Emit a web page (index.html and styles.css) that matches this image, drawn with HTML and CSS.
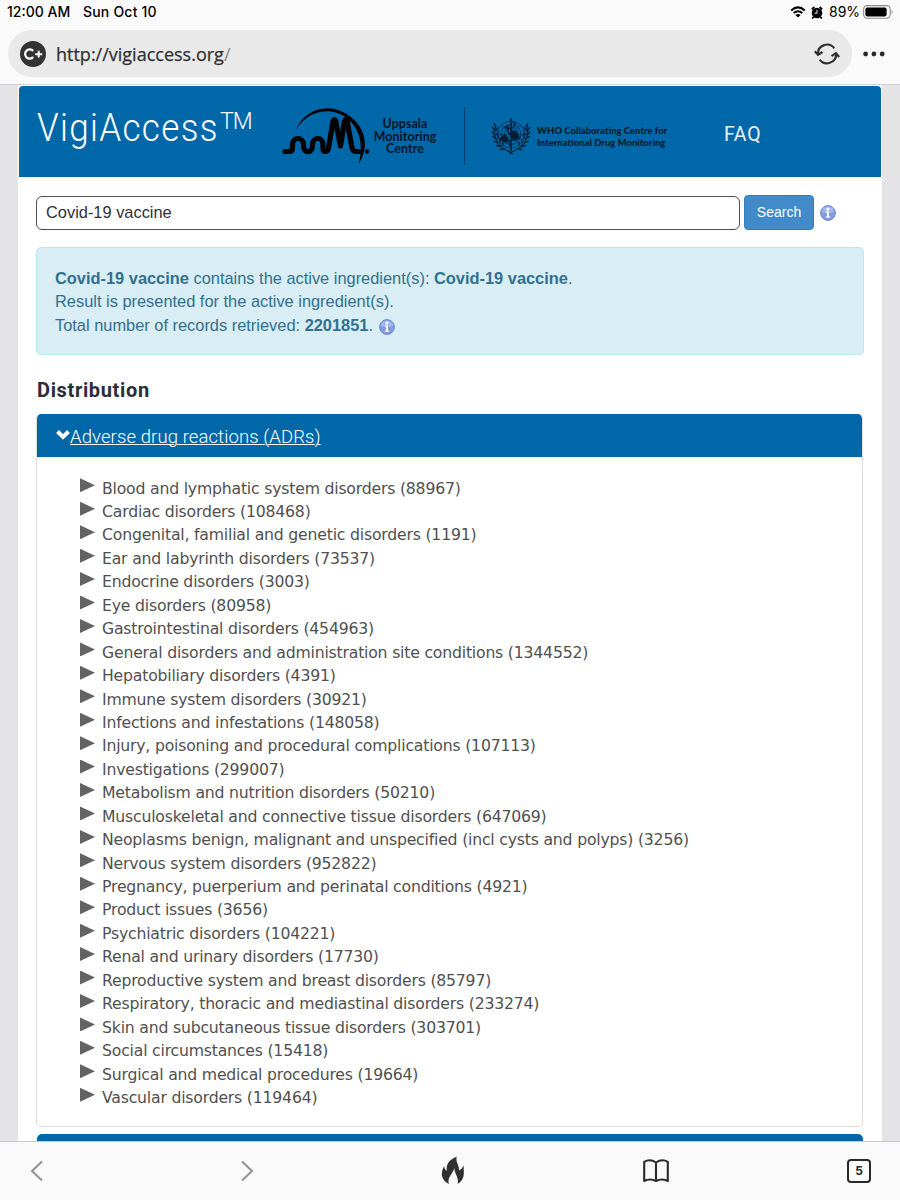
FILE: index.html
```html
<!DOCTYPE html>
<html lang="en">
<head>
<meta charset="utf-8">
<title>VigiAccess</title>
<link rel="stylesheet" href="styles.css">
</head>
<body>
<header class="chrome">
  <div class="status">
    <span class="time">12:00 AM</span><span class="date">Sun Oct 10</span>
    <div class="indicators">
      <svg class="wifi" width="16" height="12" viewBox="0 0 16 12"><path d="M1.2 4.4Q8-1.6 14.8 4.4M3.7 7.1Q8 3.4 12.3 7.1" fill="none" stroke="#000" stroke-width="2"/><path d="M8 11.6L5.4 9Q8 7 10.6 9z"/></svg>
      <svg class="alarm" width="12" height="13" viewBox="0 0 12 13"><circle cx="6" cy="7" r="5.300"/><path d="M.8 3.4L3.4 1M11.2 3.4L8.6 1M2.5 11L1.2 12.5M9.5 11l1.3 1.5" stroke="#000" stroke-width="1.8"/><path d="M6 3.8V7.2H3.4" fill="none" stroke="#fff" stroke-width=".9"/></svg>
      <span class="percent">89%</span>
      <svg class="battery" width="31" height="14" viewBox="0 0 31 14"><rect x=".6" y=".6" width="26.6" height="12.6" rx="3.6" fill="none" stroke="#8c8c8c" stroke-width="1.1"/><rect x="2.4" y="2.4" width="21.2" height="9" rx="1.8"/><path d="M28.6 4.6q2 2.3 0 4.6z" fill="#8c8c8c"/></svg>
    </div>
  </div>
  <div class="toolbar">
    <div class="address">
      <svg class="badge" width="26" height="26" viewBox="0 0 26 26"><circle cx="13" cy="13" r="13" fill="#333"/><path d="M13.200 10A4.600 4.600 0 1 0 13.200 16" fill="none" stroke="#fff" stroke-width="2.200"/><path d="M15.2 13.2h7M18.7 9.8v6.8" stroke="#fff" stroke-width="2"/></svg>
      <span class="url">http://vigiaccess.org<i>/</i></span>
      <svg class="reload" width="26" height="22" viewBox="0 0 26 22" fill="none" stroke="#303030" stroke-width="2.2"><path d="M20.3 5.3A9.1 9.1 0 0 0 3.9 10.8M5.7 16.6A9.1 9.1 0 0 0 22.1 11.2"/><path d="M.8 8.2L4 11.8 8.5 9M17.5 13.2L22 10.2 25.2 14"/></svg>
    </div>
    <svg class="more" width="24" height="6" viewBox="0 0 24 6" fill="#292929"><circle cx="3.6" cy="3" r="2.4"/><circle cx="11.9" cy="3" r="2.4"/><circle cx="20.2" cy="3" r="2.4"/></svg>
  </div>
</header>

<main class="viewport">
  <div class="page">
    <div class="banner">
      <h1 class="title"><span class="name">VigiAccess</span><span class="tm">TM</span></h1>
      <svg class="umc" width="88" height="60" viewBox="0 0 88 60"><path d="M3.2 45.500H7Q10.500 45.500 10.500 42V38.500C10.500 30.500 21.500 30.500 21.500 38.500V40C21.500 47.500 30.500 47.500 30.500 40V38.500C30.500 30.500 41 30.500 41 38.500V43Q41 45.500 43.500 45.500Q46 45.500 46.500 42L51 15Q52.300 12 53.600 15L58.500 40L62.500 15Q63.800 12 65.100 15L70 42Q71 45.500 74 45.500H77" fill="none" stroke="#000" stroke-width="5.200" stroke-linecap="round" stroke-linejoin="round"/><path d="M14 24C21 5 44-4 63 7C84 19 88 41 76.500 58C82 39 78 21 62 10C46 0 24 6 14 24z"/><circle cx="85" cy="45.500" r="2.200"/></svg>
      <div class="umc-name">Uppsala<br>Monitoring<br>Centre</div>
      <div class="divider"></div>
      <svg class="who" width="40" height="38" viewBox="0 0 40 38" fill="none" stroke="#031f35"><g stroke-width=".6"><circle cx="20" cy="17.500" r="13.500"/><circle cx="20" cy="17.500" r="10"/><circle cx="20" cy="17.500" r="6.500"/><path d="M6.500 17.500h27M10.500 8l19 19M29.500 8l-19 19"/></g><path d="M20 1v33" stroke-width="1.500"/><path d="M20 5q5 0 4 3t-4 3-3 3 3 3 2.500 3-2.500 3-2 3 2 3" stroke-width="1.100"/><path d="M8 22l5-5 3 2 2 5-4 2zM20 13l6 2 3 6-5 3-4-3zM13 10l5-2-1 5z" fill="#031f35" stroke-width=".3"/><path d="M5 8Q-.5 25 16 33.500M35 8Q40.500 25 24 33.500" stroke-width="1.200"/><path d="M4.500 10L3 6M4 14L1 10M4 18L.8 14.500M5 22L1.200 19M7 26L2.500 24M10 29.500L5 28.500M14 32L8.500 32.500M5 14l2-4M5 18l2.500-3M6 22l2-4M8.500 26l1-4M12 29l0-4M35.500 10L37 6M36 14l3-4M36 18l3.200-3.500M35 22l3.800-3M33 26l4.500-2M30 29.500l5-1M26 32l5.500.5M35 14l-2-4M35 18l-2.500-3M34 22l-2-4M31.500 26l-1-4M28 29v-4M16 33.500l6 3M24 33.500L18 36.500" stroke-width="1.300"/></svg>
      <div class="who-name">WHO Collaborating Centre for<br>International Drug Monitoring</div>
      <a class="faq">FAQ</a>
    </div>

    <div class="search">
      <div class="field">Covid-19 vaccine</div>
      <div class="button">Search</div>
      <svg class="info" width="16" height="16" viewBox="0 0 16 16"><circle cx="8" cy="8" r="7.400" fill="#829be0" stroke="#7289c8"/><path d="M2 7a6 5.500 0 0 1 12 0q-6 2-12 0z" fill="#a5b8ec"/><circle cx="8" cy="4" r="1.500" fill="#fff"/><path d="M6 6.500h3v5h1.300v1.200H5.800v-1.200H7v-3.800H6z" fill="#fff"/></svg>
    </div>

    <div class="notice">
      <p class="n1"><b>Covid-19 vaccine</b> contains the active ingredient(s): <b>Covid-19 vaccine</b>.</p>
      <p class="n2">Result is presented for the active ingredient(s).</p>
      <p class="n3"><span>Total number of records retrieved: <b>2201851</b>.</span>
        <svg class="info" width="16" height="16" viewBox="0 0 16 16"><circle cx="8" cy="8" r="7.400" fill="#829be0" stroke="#7289c8"/><path d="M2 7a6 5.500 0 0 1 12 0q-6 2-12 0z" fill="#a5b8ec"/><circle cx="8" cy="4" r="1.500" fill="#fff"/><path d="M6 6.500h3v5h1.300v1.200H5.800v-1.200H7v-3.800H6z" fill="#fff"/></svg></p>
    </div>

    <h2 class="heading">Distribution</h2>
    <section class="panel">
      <div class="panel-head"><svg class="chev" width="14" height="10" viewBox="0 0 14 10"><path d="M1.500 1.500L7 7l5.500-5.500" fill="none" stroke="#fff" stroke-width="4"/></svg><a class="panel-link">Adverse drug reactions (ADRs)</a></div>
      <ul class="list">
        <li>Blood and lymphatic system disorders (88967)</li>
        <li>Cardiac disorders (108468)</li>
        <li>Congenital, familial and genetic disorders (1191)</li>
        <li>Ear and labyrinth disorders (73537)</li>
        <li>Endocrine disorders (3003)</li>
        <li>Eye disorders (80958)</li>
        <li>Gastrointestinal disorders (454963)</li>
        <li>General disorders and administration site conditions (1344552)</li>
        <li>Hepatobiliary disorders (4391)</li>
        <li>Immune system disorders (30921)</li>
        <li>Infections and infestations (148058)</li>
        <li>Injury, poisoning and procedural complications (107113)</li>
        <li>Investigations (299007)</li>
        <li>Metabolism and nutrition disorders (50210)</li>
        <li>Musculoskeletal and connective tissue disorders (647069)</li>
        <li>Neoplasms benign, malignant and unspecified (incl cysts and polyps) (3256)</li>
        <li>Nervous system disorders (952822)</li>
        <li>Pregnancy, puerperium and perinatal conditions (4921)</li>
        <li>Product issues (3656)</li>
        <li>Psychiatric disorders (104221)</li>
        <li>Renal and urinary disorders (17730)</li>
        <li>Reproductive system and breast disorders (85797)</li>
        <li>Respiratory, thoracic and mediastinal disorders (233274)</li>
        <li>Skin and subcutaneous tissue disorders (303701)</li>
        <li>Social circumstances (15418)</li>
        <li>Surgical and medical procedures (19664)</li>
        <li>Vascular disorders (119464)</li>
      </ul>
    </section>
    <div class="next-panel"></div>
  </div>
</main>

<footer class="tabs">
  <svg class="back" width="14" height="22" viewBox="0 0 14 22"><path d="M12 1.500L2 11l10 9.500" fill="none" stroke="#929292" stroke-width="2"/></svg>
  <svg class="forward" width="14" height="22" viewBox="0 0 14 22"><path d="M2 1.500L12 11 2 20.500" fill="none" stroke="#929292" stroke-width="2"/></svg>
  <svg class="fire" width="24" height="29" viewBox="0 0 24 29"><path d="M15.800.5C14 6 18.500 9 18 14.500Q20.500 13.500 22.800 9.500C22 14 25.500 23 16.500 28C18.500 22 13.500 18 13.300 12C12.500 17 5.500 22 8 28C-.5 24-.5 16 3.300 10Q3 13.500 5.800 15C5 8 8 4 15.800.5z" fill="#303030"/></svg>
  <svg class="book" width="26" height="24" viewBox="0 0 26 24"><path d="M13 3.500Q7-.5 1.200 2.800V22Q7 19 13 22Q19 19 24.800 22V2.800Q19-.5 13 3.500V22" fill="none" stroke="#292929" stroke-width="2.100" stroke-linejoin="round"/></svg>
  <div class="count">5</div>
</footer>
</body>
</html>
```
FILE: styles.css
```css
* { box-sizing: border-box; }
body { margin: 0; width: 900px; height: 1200px; overflow: hidden; display: flex; flex-direction: column; background: #e4e4e7; font-family: "Liberation Sans", Arial, sans-serif; }
svg { display: block; flex: none; }
p, h1, h2, ul { margin: 0; padding: 0; }

.chrome { height: 85px; flex: none; background: #fafafa; border-bottom: 1px solid #d2d2d4; }
.status { height: 30px; padding: 2px 6px 0 7px; display: flex; align-items: flex-start; font: 500 14px/20px Inter, sans-serif; color: #000; white-space: nowrap; }
.time { width: 76px; }
.date { letter-spacing: .2px; }
.indicators { margin-left: auto; display: flex; align-items: center; height: 20px; }
.alarm { margin: 0 6px 0 5px; }
.percent { width: 34px; font-weight: 400; }
.toolbar { display: flex; align-items: center; }
.address { width: 844px; height: 47px; margin-left: 8px; padding: 0 12px; border-radius: 24px; background: #e9e9e9; display: flex; align-items: center; }
.url { margin-left: 10px; font: 500 18px/24px "Open Sans", sans-serif; color: #303030; -webkit-text-stroke: .25px #303030; }
.url i { font-style: normal; color: #888; -webkit-text-stroke: 0; }
.reload { margin-left: auto; }
.more { margin-left: 10px; }

.viewport { height: 1056px; flex: none; overflow: hidden; }
.page { width: 864px; height: 1056px; padding-top: 1px; margin-left: 18px; background: #fff; overflow: hidden; }
.banner { width: 862px; height: 91px; margin-left: 1px; background: #0067a9; border-radius: 4px 4px 0 0; display: flex; align-items: flex-start; white-space: nowrap; }
.title { width: 246px; padding: 19px 0 0 18px; display: flex; align-items: flex-start; font: 300 39px/46px Roboto, sans-serif; color: #fff; }
.name { width: 183px; letter-spacing: 1.5px; transform: scaleX(.898); transform-origin: 0 0; }
.tm { font-size: 23px; line-height: 34px; letter-spacing: -1px; }
.umc { margin: 20px 0 0 17px; }
.umc-name { width: 66px; margin: 32px 0 0 2px; font: 700 12.4px/12.6px Lato, sans-serif; letter-spacing: .1px; text-align: center; color: #001422; }
.divider { width: 1px; height: 58px; margin: 21px 0 0 26px; background: #003c67; }
.who { margin: 31px 0 0 26px; }
.who-name { width: 140px; margin: 39px 0 0 6px; font: 900 9.5px/11.5px Lato, sans-serif; color: #001a2b; }
.faq { margin: 36px 0 0 47px; font: 400 19.5px/26px Roboto, sans-serif; color: #e8f3fa; letter-spacing: .7px; }

.search { height: 71px; padding: 18px 0 0 18px; display: flex; align-items: flex-start; }
.field { width: 704px; height: 34px; margin-top: 1px; padding-left: 9px; border: 1.5px solid #515151; border-radius: 6px; font-size: 16.4px; line-height: 31px; color: #303038; }
.button { width: 70px; height: 35px; margin: 0 6px 0 4px; border-radius: 4px; background: #428bca; border: 1px solid #357ebd; font-size: 14px; line-height: 33px; text-align: center; color: #fff; }
.search .info { margin-top: 10px; }

.notice { width: 828px; height: 108px; margin: -1px 0 0 18px; padding: 19px 18px; background: #d9edf5; border: 1px solid #bce8f1; border-radius: 5px; font-size: 16.4px; line-height: 23.4px; color: #31708f; white-space: nowrap; }
.n3 { display: flex; align-items: center; }
.n3 .info { margin: 2px 0 0 6px; }

.heading { margin: 21px 0 0 19px; font: 700 20px/28px Roboto, sans-serif; letter-spacing: .65px; color: #2b2d38; height: 38px; }
.panel { width: 827px; height: 713px; margin-left: 18px; border: 1px solid #dcdfdc; border-top: 0; border-radius: 5px; overflow: hidden; }
.panel-head { height: 43px; padding: 3px 0 0 19px; background: #0067a9; display: flex; align-items: center; }
.chev { margin-bottom: 5px; }
.panel-link { font: 300 18.5px/24px Roboto, sans-serif; letter-spacing: .1px; color: #fff; text-decoration: underline; text-decoration-thickness: 1px; }
.list { list-style: none; padding: 19.6px 0 0 43px; }
.list li { display: flex; height: 23.44px; align-items: center; font: 15.7px/23.44px "DejaVu Sans", Verdana, sans-serif; letter-spacing: -.205px; color: #505050; white-space: nowrap; }
.list li::before { content: ""; width: 15px; height: 14px; margin: 0 7px 6px 0; background: #636363; clip-path: polygon(0 0, 100% 50%, 0 100%); }
.next-panel { width: 826px; height: 30px; margin: 7px 0 0 19px; border-radius: 5px 5px 0 0; background: #0067a9; }

.tabs { height: 59px; flex: none; padding: 0 0 1px 30px; background: #fafafa; border-top: 1px solid #c9c9cc; display: flex; align-items: center; }
.forward { margin-left: 196px; }
.fire { margin-left: 187px; }
.book { margin-left: 178px; }
.count { margin-left: 178px; width: 24px; height: 24px; border: 2px solid #292929; border-radius: 4px; font: 700 12px/20px Inter, sans-serif; text-align: center; color: #292929; }
```
